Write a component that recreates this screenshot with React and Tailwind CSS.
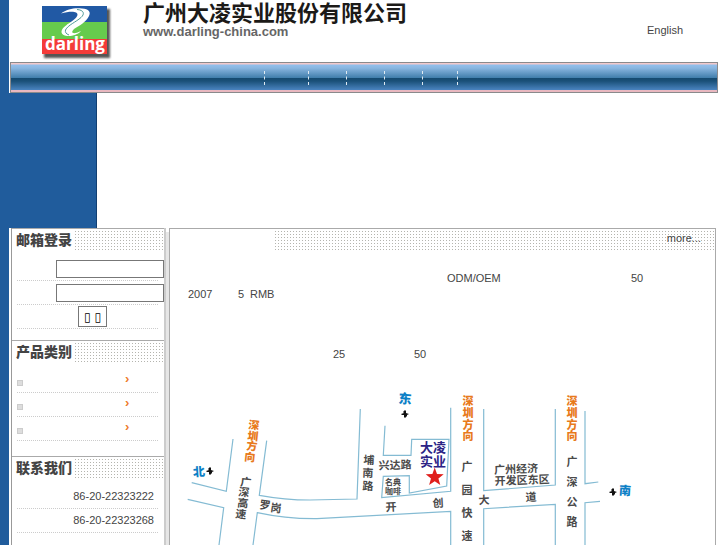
const PRODUCTS = ['product-1', 'product-2', 'product-3']

const PHONES = ['86-20-22323222', '86-20-22323268']

const NAV_WIDTHS = ['w-[44px]', 'w-[38px]', 'w-[38px]', 'w-[38px]', 'w-[35px]', 'w-[60px]']

const DOTS =
  'bg-[linear-gradient(to_right,transparent_1px,#fff_1px),linear-gradient(to_bottom,#b4b4ae_1px,#fff_1px)]'

const ROADS = [
  'M191.7 482.7L226.3 491.3L233 439',
  'M266.7 440.7L259.3 495.3Q285 500 310 500L357 499L360.3 409',
  'M187.7 499.3L223.7 507.7L219 545',
  'M253 545L257.3 512.7Q286 519 317 518.7L450.7 511.3V545',
  'M450.7 407.7V491.3L381.7 497.7L383.3 476.3L409.3 475.7V493L446.7 486L449 439.3H411.7L411 455.3H383.3L385 425.7',
  'M483.7 409V490.7L555.3 485V409',
  'M483.7 545V508.7L555.3 504.3V545',
  'M585 411V483.7L598.3 482',
  'M600 501.3L585 502.7V545',
]

// [char, x, y, rotation]
const STREETS = [
  ['广', 246, 482, 6],
  ['深', 244, 492, 6],
  ['高', 243, 503, 6],
  ['速', 241, 514, 6],
  ['罗', 265, 505, 8],
  ['岗', 276, 508, 8],
  ['埔', 369, 460, 2],
  ['南', 368, 473, 2],
  ['路', 368, 486, 2],
  ['开', 391, 507, -3],
  ['创', 438, 503, -3],
  ['大', 484, 500, -3],
  ['道', 531, 497, -3],
  ['广', 467, 467, 0],
  ['园', 467, 490, 0],
  ['快', 467, 513, 0],
  ['速', 467, 536, 0],
  ['广', 572, 462, 0],
  ['深', 572, 482, 0],
  ['公', 572, 502, 0],
  ['路', 572, 522, 0],
]

const DIRECTIONS = [
  ['深', 254, 425, 6],
  ['圳', 253, 436, 6],
  ['方', 252, 446, 6],
  ['向', 250, 457, 6],
  ['深', 468, 401, 0],
  ['圳', 468, 413, 0],
  ['方', 468, 425, 0],
  ['向', 468, 436, 0],
  ['深', 572, 401, 0],
  ['圳', 572, 413, 0],
  ['方', 572, 425, 0],
  ['向', 572, 436, 0],
]

function Logo() {
  return (
    <svg width="74" height="56" viewBox="0 0 74 56" role="img" aria-label="darling">
      <defs>
        <filter id="shadow" x="-10%" y="-10%" width="130%" height="130%">
          <feGaussianBlur stdDeviation="1.3" />
        </filter>
      </defs>
      <rect x="3" y="4" width="66" height="49" fill="#555" filter="url(#shadow)" />
      <rect x="1" y="1" width="65" height="16" fill="#2159a4" />
      <rect x="1" y="17" width="65" height="17" fill="#66cb4d" />
      <rect x="1" y="34" width="65" height="15" fill="#f43b39" />
      <path
        d="M20 8.5C26 3.5 35 2.5 41 3.5C48 4 50 7 48 11C45 17 38 21 33 24C29 28 32 30 40 26C35 32 21 33 20.5 27C21 20 35 16 36.500 10C37 6 29 6 20 8.5Z"
        fill="#fff"
      />
      <path
        d="M36 4.5C43 5 44 9 40 12.5C35 17 27 20 24.5 25C24 27 25 29 28 30"
        fill="none"
        stroke="#3d8f8c"
        strokeWidth="0.9"
      />
      <text
        x="34"
        y="45"
        textAnchor="middle"
        fill="#fff"
        className="font-['Open_Sans','Noto_Sans',sans-serif] text-[17px] font-bold"
      >
        darling
      </text>
    </svg>
  )
}

function SectionTitle({ children }) {
  return (
    <div className="flex h-7 items-start pt-[2px]">
      <h2 className="w-[63px] pl-1 text-[14px] leading-[18px] font-black whitespace-nowrap text-[#444]">
        {children}
      </h2>
      <div className={`mr-px h-[19px] flex-1 bg-[size:3px_3px] ${DOTS}`} />
    </div>
  )
}

function Row({ children }) {
  return (
    <div className="mr-[6px] ml-[5px] flex h-6 items-center border-b border-dotted border-[#ccc]">
      {children}
    </div>
  )
}

function Label({ item, className }) {
  const [char, x, y, angle] = item
  return (
    <text x={x} y={y} transform={`rotate(${angle} ${x} ${y})`} className={className}>
      {char}
    </text>
  )
}

function Compass({ x, y }) {
  return (
    <path
      transform={`translate(${x} ${y})`}
      d="M-4 0L-1 -1L-2 -2L0 -4L1 -3L1 -1L4 0L2 1L2 2L0 4L-1 3L-1 1L-3 1Z"
      fill="#111"
    />
  )
}

function LocationMap() {
  return (
    <svg
      width="545"
      height="160"
      viewBox="170 385 545 160"
      className="block max-w-full [&_text]:[dominant-baseline:central] [&_text]:[text-anchor:middle]"
    >
      <g fill="none" stroke="#84bbd3" strokeWidth="1.2">
        {ROADS.map((d) => (
          <path key={d} d={d} />
        ))}
      </g>

      {STREETS.map((item, i) => (
        <Label key={i} item={item} className="fill-[#4a4a4a] text-[11px] font-bold" />
      ))}
      {DIRECTIONS.map((item, i) => (
        <Label key={i} item={item} className="fill-[#e87a1c] text-[11px] font-black" />
      ))}

      <Label item={['兴达路', 395, 465, -2]} className="fill-[#4a4a4a] text-[11px] font-bold" />
      <Label item={['名典', 393, 482, 0]} className="fill-[#4a4a4a] text-[8px] font-bold" />
      <Label item={['咖啡', 393, 491, 0]} className="fill-[#4a4a4a] text-[8px] font-bold" />
      <Label item={['广州经济', 516, 469, -2]} className="fill-[#4a4a4a] text-[11px] font-bold" />
      <Label item={['开发区东区', 522, 480, -2]} className="fill-[#4a4a4a] text-[11px] font-bold" />
      <Label item={['大凌', 433, 447, 0]} className="fill-[#2b2285] text-[13px] font-bold" />
      <Label item={['实业', 433, 461, 0]} className="fill-[#2b2285] text-[13px] font-bold" />

      <path
        d="M434.7 467.5L437 474L443.7 474.2L438.4 478.4L440.3 485L434.7 481.2L429.1 485L431 478.4L425.7 474.2L432.4 474Z"
        fill="#e01f1c"
      />

      <Label item={['北', 199, 472, -4]} className="fill-[#0c80c6] text-[12px] font-black" />
      <Label item={['东', 405, 399, 4]} className="fill-[#0c80c6] text-[13px] font-black" />
      <Label item={['南', 625, 491, 4]} className="fill-[#0c80c6] text-[12px] font-black" />
      <Compass x={210} y={471} />
      <Compass x={405} y={414} />
      <Compass x={613} y={492} />
    </svg>
  )
}

export default function App() {
  return (
    <div className="flex h-screen overflow-hidden bg-white font-['Liberation_Sans','Noto_Sans_CJK_SC',sans-serif] text-[11px] leading-4 text-[#444]">
      <div className="w-[9px] shrink-0 bg-[#205c9c]" />

      <div className="flex min-w-0 flex-1 flex-col">
        <header className="flex h-[62px] shrink-0 items-start pr-11">
          <div className="w-[134px] shrink-0 pt-[5px] pl-8">
            <Logo />
          </div>
          <div className="flex-1 pt-1">
            <h1 className="text-[22px] leading-5 font-bold text-[#1c1a18]">广州大凌实业股份有限公司</h1>
            <p className="text-[13px] leading-4 font-bold text-[#666]">www.darling-china.com</p>
          </div>
          <a href="#english" className="pt-[22px]">
            English
          </a>
        </header>

        <nav className="mr-[9px] ml-px flex h-[31px] shrink-0 items-center border border-[#8a8a8c] bg-[linear-gradient(to_bottom,#f3c9cb_0,#f3c9cb_1px,#92bfec_2px,#8ab6e0_5px,#3f7dab_15px,#154a70_15px,#1a5078_18px,#4a84c0_27px,#e9b8c0_27px)] pl-[253px]">
          {NAV_WIDTHS.map((width, i) => (
            <span key={i} className={`h-[14px] border-l border-dashed border-[#dfeaf2] ${width}`} />
          ))}
        </nav>

        <div className="h-[135px] w-[88px] shrink-0 border-r border-[#123f72] bg-[#205c9c]" />

        <div className="flex min-h-0 flex-1 pr-[11px]">
          <aside className="ml-[2px] w-[155px] shrink-0 border-r-2 border-l border-r-[#ccc] border-l-[#999]">
            <section className="border-t border-[#aaa] pb-[11px]">
              <SectionTitle>邮箱登录</SectionTitle>
              <form onSubmit={(e) => e.preventDefault()}>
                <Row>
                  <input
                    type="text"
                    aria-label="用户名"
                    className="ml-[39px] h-[18px] w-[108px] shrink-0 border border-[#777] bg-white px-1"
                  />
                </Row>
                <Row>
                  <input
                    type="password"
                    aria-label="密码"
                    className="ml-[39px] h-[18px] w-[108px] shrink-0 border border-[#777] bg-white px-1"
                  />
                </Row>
                <Row>
                  <button
                    type="submit"
                    className="ml-[61px] flex h-[21px] w-[29px] items-center justify-center gap-1 border border-[#777] bg-white font-['DejaVu_Sans',sans-serif] text-[12px] leading-4 text-black"
                  >
                    <span>▯</span>
                    <span>▯</span>
                  </button>
                </Row>
              </form>
            </section>

            <section className="border-t border-[#aaa] pb-[15px]">
              <SectionTitle>产品类别</SectionTitle>
              {PRODUCTS.map((id) => (
                <Row key={id}>
                  <span className="mt-1 h-[6px] w-[6px] border border-[#ccc] bg-[#ddd]" />
                  <a href={`#${id}`} className="ml-[102px] pb-[3px] text-[13px] font-bold text-[#ee7a2a]">
                    ›
                  </a>
                </Row>
              ))}
            </section>

            <section className="border-t border-[#aaa]">
              <SectionTitle>联系我们</SectionTitle>
              {PHONES.map((phone) => (
                <Row key={phone}>
                  <span className="ml-auto pr-1 pb-px">{phone}</span>
                </Row>
              ))}
            </section>
          </aside>

          <div className="mt-1 w-[3px] shrink-0 bg-[#e6e6e6]" />

          <main className="min-w-0 flex-1 border border-b-0 border-[#aaa]">
            <div className="flex h-[41px] items-start pt-[2px]">
              <div
                className={`mr-px ml-[105px] flex h-[19px] flex-1 justify-end bg-[size:3px_3px] pr-[13px] ${DOTS}`}
              >
                <a href="#more" className="leading-[14px]">
                  more...
                </a>
              </div>
            </div>

            <div className="h-[115px] pl-[18px]">
              <p className="flex">
                <span className="ml-[259px] w-[184px]">ODM/OEM</span>
                <span>50</span>
              </p>
              <p className="flex">
                <span className="w-[50px]">2007</span>
                <span className="w-3">5</span>
                <span>RMB</span>
              </p>
              <p className="mt-11 flex">
                <span className="ml-[145px] w-[81px]">25</span>
                <span>50</span>
              </p>
            </div>

            <LocationMap />
          </main>
        </div>
      </div>
    </div>
  )
}
